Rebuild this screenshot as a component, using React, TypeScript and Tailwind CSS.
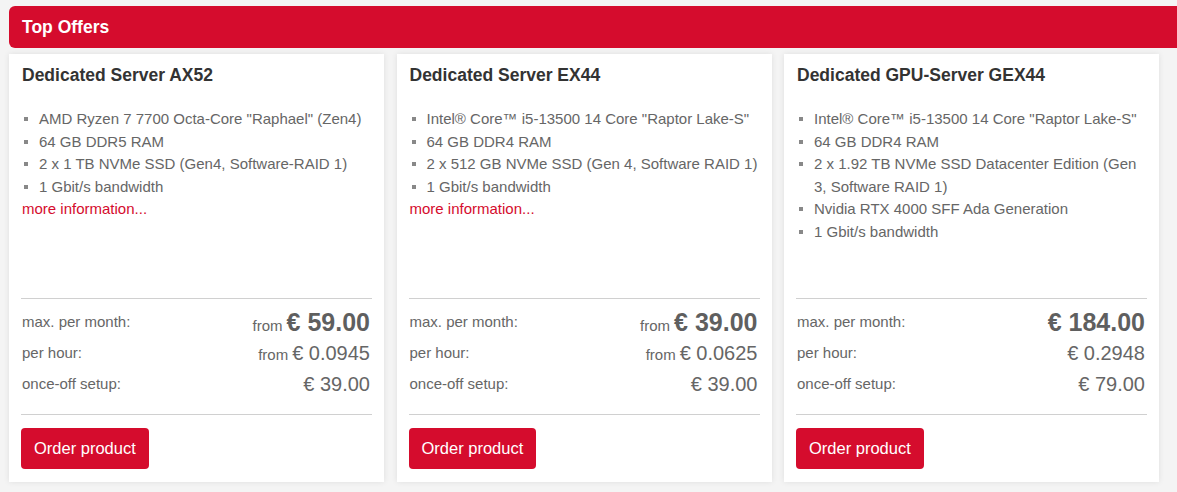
import React from "react";

type Offer = {
  title: string;
  features: string[];
  more: boolean;
  monthFrom: boolean;
  month: string;
  hourFrom: boolean;
  hour: string;
  setup: string;
};

const offers: Offer[] = [
  {
    title: "Dedicated Server AX52",
    features: [
      'AMD Ryzen 7 7700 Octa-Core "Raphael" (Zen4)',
      "64 GB DDR5 RAM",
      "2 x 1 TB NVMe SSD (Gen4, Software-RAID 1)",
      "1 Gbit/s bandwidth",
    ],
    more: true,
    monthFrom: true,
    month: "€ 59.00",
    hourFrom: true,
    hour: "€ 0.0945",
    setup: "€ 39.00",
  },
  {
    title: "Dedicated Server EX44",
    features: [
      'Intel® Core™ i5-13500 14 Core "Raptor Lake-S"',
      "64 GB DDR4 RAM",
      "2 x 512 GB NVMe SSD (Gen 4, Software RAID 1)",
      "1 Gbit/s bandwidth",
    ],
    more: true,
    monthFrom: true,
    month: "€ 39.00",
    hourFrom: true,
    hour: "€ 0.0625",
    setup: "€ 39.00",
  },
  {
    title: "Dedicated GPU-Server GEX44",
    features: [
      'Intel® Core™ i5-13500 14 Core "Raptor Lake-S"',
      "64 GB DDR4 RAM",
      "2 x 1.92 TB NVMe SSD Datacenter Edition (Gen 3, Software RAID 1)",
      "Nvidia RTX 4000 SFF Ada Generation",
      "1 Gbit/s bandwidth",
    ],
    more: false,
    monthFrom: false,
    month: "€ 184.00",
    hourFrom: false,
    hour: "€ 0.2948",
    setup: "€ 79.00",
  },
];

function Card({ o }: { o: Offer }) {
  return (
    <div className="flex h-[428px] w-[375px] shrink-0 flex-col bg-white pl-3 pr-[11px] shadow-[0_0_6px_rgba(0,0,0,0.09)]">
      <h3 className="pl-px pt-[9px] text-[17.5px] font-bold leading-[24px] text-[#333]">
        {o.title}
      </h3>
      <ul className="mt-[21px] text-[15px] leading-[22.5px] text-[#666]">
        {o.features.map((f) => (
          <li key={f} className="flex">
            <span className="flex w-[18px] shrink-0 pl-[3px] pt-[9px]">
              <span className="block h-[4px] w-[4px] bg-[#888]" />
            </span>
            <span>{f}</span>
          </li>
        ))}
      </ul>
      {o.more && (
        <div className="pl-px text-[15px] leading-[22.5px] text-[#d50c2d]">more information...</div>
      )}
      <div className="mr-px mt-auto border-t border-[#d0d0d0] pb-[14px] pt-[8px] text-[#666]">
        <div className="flex h-[31px] items-center justify-between pl-px pr-[2px]">
          <span className="text-[15px]">max. per month:</span>
          <span className="flex items-baseline">
            {o.monthFrom && <span className="mr-[4px] text-[15px]">from</span>}
            <span className="text-[25px] font-bold leading-[31px] text-[#5f5f5f]">{o.month}</span>
          </span>
        </div>
        <div className="flex h-[31px] items-center justify-between pl-px pr-[2px]">
          <span className="text-[15px]">per hour:</span>
          <span className="flex items-baseline">
            {o.hourFrom && <span className="mr-[4px] text-[15px]">from</span>}
            <span className="text-[20px] leading-[31px]">{o.hour}</span>
          </span>
        </div>
        <div className="flex h-[31px] items-center justify-between pl-px pr-[2px]">
          <span className="text-[15px]">once-off setup:</span>
          <span className="text-[20px] leading-[31px]">{o.setup}</span>
        </div>
      </div>
      <div className="mr-px border-t border-[#d0d0d0] pb-[13px] pt-[13px]">
        <button className="h-[41px] rounded-[4px] bg-[#d50c2d] px-[13px] text-[16.5px] text-white">
          Order product
        </button>
      </div>
    </div>
  );
}

export default function App() {
  return (
    <div
      className="h-[492px] w-full overflow-hidden bg-[#f4f4f4] pt-[6px] pl-[9px]"
      style={{ fontFamily: '"Liberation Sans", Arial, sans-serif' }}
    >
      <div className="flex h-[42px] items-center rounded-l-[6px] bg-[#d50c2d] pl-[13px] text-[17.5px] font-bold text-white">
        Top Offers
      </div>
      <div className="mt-[6px] flex gap-[12.5px]">
        {offers.map((o) => (
          <Card key={o.title} o={o} />
        ))}
      </div>
    </div>
  );
}
